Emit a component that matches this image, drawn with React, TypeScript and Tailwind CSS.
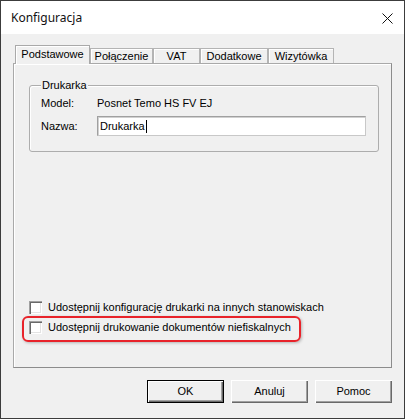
import React from "react";

const raised =
  "shadow-[inset_1px_1px_#ffffff,inset_-1px_-1px_#696969,inset_-2px_-2px_#a0a0a0]";

function Tab({ label, w, selected }: { label: string; w: string; selected?: boolean }) {
  if (selected) {
    return (
      <div
        className={`${w} h-[19px] -mb-px relative z-10 bg-[#f0f0f0] border-t border-l border-r border-[#a9a9a9] shadow-[inset_1px_1px_#ffffff] flex items-center justify-center pb-[1px]`}
      >
        {label}
      </div>
    );
  }
  return (
    <div
      className={`${w} h-[15px] bg-[#f0f0f0] border-t border-l border-r border-[#b4b4b4] shadow-[inset_1px_1px_#ffffff] flex items-center justify-center`}
    >
      {label}
    </div>
  );
}

function Checkbox() {
  return (
    <div className="w-[13px] h-[13px] bg-white shrink-0 shadow-[inset_1px_1px_#a0a0a0,inset_2px_2px_#696969,inset_-1px_-1px_#ffffff,inset_-2px_-2px_#e3e3e3]" />
  );
}

export default function App() {
  return (
    <div className="w-[405px] h-[419px] border border-[#3c3c3c] bg-[#f0f0f0] flex flex-col font-['Liberation_Sans',Arial,sans-serif] text-[11px] text-black leading-none">
      {/* Title bar */}
      <div className="h-[33px] bg-white flex items-center justify-between pl-[10px] pr-[11px] shrink-0">
        <span className="font-['Noto_Sans',sans-serif] text-[12px] text-[#111]">Konfiguracja</span>
        <svg width="11" height="11" viewBox="0 0 11 11" className="mt-[1px]">
          <path d="M0.5 0.5 L10.5 10.5 M10.5 0.5 L0.5 10.5" stroke="#111" strokeWidth="1" fill="none" />
        </svg>
      </div>

      {/* Body */}
      <div className="flex-1 flex flex-col px-[12px] pt-[11px] pb-[13px]">
        {/* Tabs */}
        <div className="flex items-end h-[18px] pl-[2px]">
          <Tab label="Podstawowe" w="w-[75px]" selected />
          <Tab label="Połączenie" w="w-[63px]" />
          <Tab label="VAT" w="w-[47px]" />
          <Tab label="Dodatkowe" w="w-[68px]" />
          <Tab label="Wizytówka" w="w-[66px]" />
        </div>

        {/* Panel */}
        <div className="h-[305px] border border-t-[#a9a9a9] border-l-[#a9a9a9] border-r-[#8c8c8c] border-b-[#8c8c8c] shadow-[inset_1px_1px_#ffffff] flex flex-col pl-[15px] pr-[12px] pt-[21px] pb-[33px]">
          {/* Group box */}
          <div className="relative h-[67px] border border-[#adadad] rounded-[3px] shadow-[inset_1px_1px_#ffffff] pl-[11px] pr-[12px] pt-[10px]">
            <span className="absolute left-[11px] -top-[7px] bg-[#f0f0f0] px-[1px] leading-[13px]">Drukarka</span>
            <div className="flex items-center h-[14px]">
              <span className="w-[56px]">Model:</span>
              <span>Posnet Temo HS FV EJ</span>
            </div>
            <div className="flex items-center h-[20px] mt-[6px]">
              <span className="w-[56px]">Nazwa:</span>
              <div className="flex-1 h-[20px] bg-white border border-t-[#a0a0a0] border-l-[#a0a0a0] border-r-[#c8c8c8] border-b-[#c8c8c8] shadow-[inset_1px_1px_#d0d0d0] flex items-center pl-[2px]">
                <span>Drukarka</span>
                <span className="w-px h-[13px] bg-black ml-[1px]" />
              </div>
            </div>
          </div>

          <div className="flex-1" />

          <div className="flex items-center h-[13px] gap-[6px] mb-[7px]">
            <Checkbox />
            <span>Udostępnij konfigurację drukarki na innych stanowiskach</span>
          </div>
          <div className="relative flex items-center h-[13px] gap-[6px]">
            <Checkbox />
            <span>Udostępnij drukowanie dokumentów niefiskalnych</span>
            <div className="absolute -left-[7px] -top-[5px] w-[279px] h-[26px] border-2 border-[#e8232a] rounded-[6px] shadow-[1px_1px_3px_rgba(0,0,0,0.25)]" />
          </div>
        </div>

        {/* Buttons */}
        <div className="flex justify-end gap-[7px] mt-[12px]">
          <button className="w-[77px] h-[23px] bg-[#f0f0f0] border border-black shadow-[inset_1px_1px_#ffffff,inset_-1px_-1px_#696969,inset_-2px_-2px_#a0a0a0] flex items-center justify-center">
            OK
          </button>
          <button className={`w-[77px] h-[23px] bg-[#f0f0f0] ${raised} flex items-center justify-center`}>
            Anuluj
          </button>
          <button className={`w-[77px] h-[23px] bg-[#f0f0f0] ${raised} flex items-center justify-center`}>
            Pomoc
          </button>
        </div>
      </div>
    </div>
  );
}
